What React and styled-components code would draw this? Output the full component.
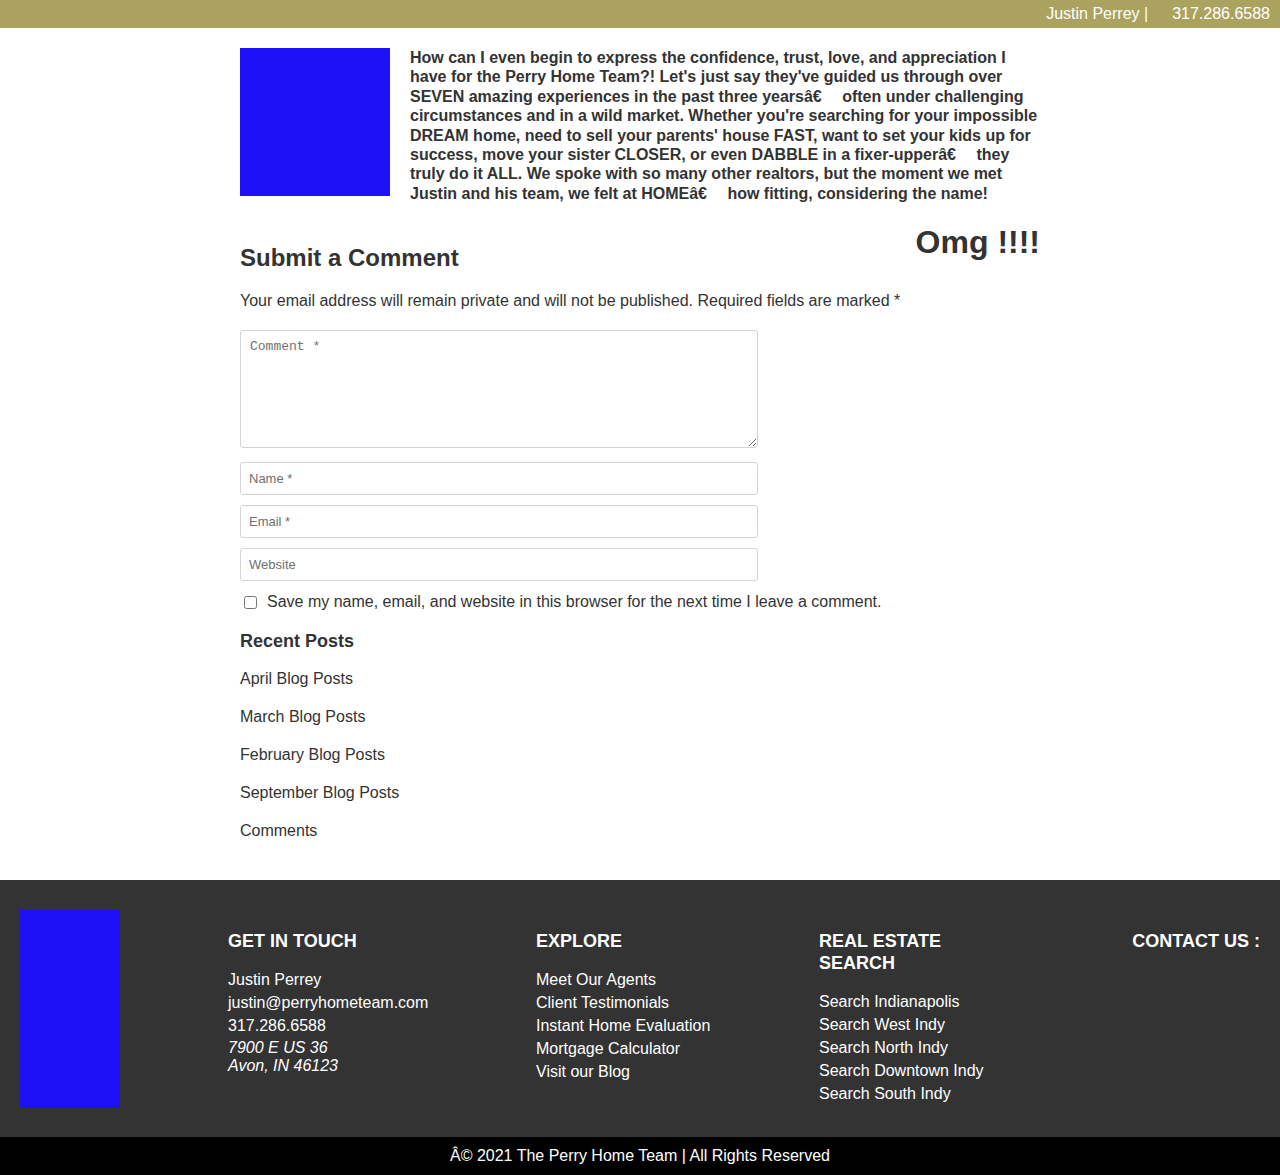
import React from "react";
import styled, { createGlobalStyle } from "styled-components";

const Global = createGlobalStyle`
  html, body { margin: 0; padding: 0; background: #fff; }
  body { font-family: "Liberation Sans", Arial, sans-serif; color: #333; font-size: 16px; }
  * { box-sizing: border-box; }
`;

const TopBar = styled.div`
  height: 28px;
  background: #aba260;
  display: flex;
  justify-content: flex-end;
  align-items: center;
  padding-right: 10px;
  color: #fff;
  font-size: 16px;
`;
const TopItem = styled.span`
  margin-left: ${(p) => p.$gap || 0}px;
`;

const Main = styled.main`
  width: 800px;
  margin: 0 auto;
  padding: 20px 0 30px;
`;

const Testimonial = styled.div`
  display: flex;
  gap: 20px;
  align-items: flex-start;
`;
const Photo = styled.div`
  flex: 0 0 150px;
  height: 148px;
  background: #1e10f7;
`;
const Quote = styled.p`
  margin: 0;
  font-weight: bold;
  font-size: 16px;
  line-height: 19.4px;
`;

const HeadRow = styled.div`
  display: flex;
  justify-content: space-between;
  align-items: flex-start;
  margin-top: 19px;
`;
const SubmitTitle = styled.h3`
  margin: 21px 0 0;
  font-size: 24px;
  line-height: 30px;
  font-weight: bold;
`;
const Omg = styled.h2`
  margin: 0;
  font-size: 32px;
  line-height: 40px;
  font-weight: bold;
`;
const Note = styled.p`
  margin: 16px 0 0;
  font-size: 16px;
  line-height: 24px;
`;

const Form = styled.form`
  display: flex;
  flex-direction: column;
  width: 518px;
  margin-top: 17px;
`;
const TextArea = styled.textarea`
  display: block;
  width: 518px;
  height: 118px;
  border: 1px solid #d4d4d4;
  border-radius: 3px;
  padding: 8px 9px;
  font-family: "Liberation Mono", monospace;
  font-size: 13px;
  margin-bottom: 14px;
  &::placeholder { color: #6f6f6f; }
`;
const Input = styled.input`
  display: block;
  width: 518px;
  height: 33px;
  border: 1px solid #d4d4d4;
  border-radius: 3px;
  padding: 0 8px;
  font-family: "Liberation Sans", Arial, sans-serif;
  font-size: 13px;
  margin-bottom: 10px;
  &::placeholder { color: #6f6f6f; }
`;
const CheckRow = styled.label`
  display: flex;
  align-items: center;
  width: 800px;
  line-height: 20px;
  font-size: 16px;
  margin-top: 1px;
`;
const Check = styled.input`
  width: 13px;
  height: 13px;
  margin: 0 10px 0 4px;
`;

const RecentTitle = styled.h4`
  margin: 18px 0 8px;
  font-size: 18px;
  line-height: 22px;
  font-weight: bold;
`;
const PostLink = styled.a`
  display: block;
  line-height: 38px;
  font-size: 16px;
  color: #333;
  text-decoration: none;
`;

const Footer = styled.footer`
  background: #333333;
  color: #fff;
  display: flex;
  padding: 30px 20px 29px;
`;
const Logo = styled.div`
  flex: 0 0 100px;
  height: 198px;
  background: #1e10f7;
  margin-right: 108px;
`;
const Col = styled.div`
  flex: 0 0 ${(p) => p.$w}px;
  padding-top: 20px;
  ${(p) => p.$right && "flex: 1 1 auto; text-align: right;"}
`;
const ColTitle = styled.h4`
  margin: 0 0 16px;
  font-size: 18px;
  line-height: 22px;
  font-weight: bold;
  text-transform: uppercase;
`;
const FLine = styled.div`
  line-height: 23px;
  font-size: 16px;
`;
const Address = styled.address`
  font-style: italic;
  line-height: 18px;
  font-size: 16px;
  margin-top: 2px;
`;

const Bottom = styled.div`
  background: #000;
  color: #fff;
  height: 38px;
  display: flex;
  align-items: center;
  justify-content: center;
  font-size: 16px;
`;

const DASH = "â€\u2003 ";

export default function App() {
  return (
    <>
      <Global />
      <TopBar>
        <TopItem>Justin Perrey |</TopItem>
        <TopItem $gap={24}>317.286.6588</TopItem>
      </TopBar>
      <Main>
        <Testimonial>
          <Photo />
          <Quote>
            {`How can I even begin to express the confidence, trust, love, and appreciation I have for the Perry Home Team?! Let's just say they've guided us through over SEVEN amazing experiences in the past three years${DASH}often under challenging circumstances and in a wild market. Whether you're searching for your impossible DREAM home, need to sell your parents' house FAST, want to set your kids up for success, move your sister CLOSER, or even DABBLE in a fixer-upper${DASH}they truly do it ALL. We spoke with so many other realtors, but the moment we met Justin and his team, we felt at HOME${DASH}how fitting, considering the name!`}
          </Quote>
        </Testimonial>
        <HeadRow>
          <SubmitTitle>Submit a Comment</SubmitTitle>
          <Omg>Omg !!!!</Omg>
        </HeadRow>
        <Note>Your email address will remain private and will not be published. Required fields are marked *</Note>
        <Form onSubmit={(e) => e.preventDefault()}>
          <TextArea placeholder="Comment *" />
          <Input placeholder="Name *" />
          <Input placeholder="Email *" />
          <Input placeholder="Website" />
          <CheckRow>
            <Check type="checkbox" />
            Save my name, email, and website in this browser for the next time I leave a comment.
          </CheckRow>
        </Form>
        <RecentTitle>Recent Posts</RecentTitle>
        <PostLink href="#">April Blog Posts</PostLink>
        <PostLink href="#">March Blog Posts</PostLink>
        <PostLink href="#">February Blog Posts</PostLink>
        <PostLink href="#">September Blog Posts</PostLink>
        <PostLink href="#">Comments</PostLink>
      </Main>
      <Footer>
        <Logo />
        <Col $w={308}>
          <ColTitle>Get in Touch</ColTitle>
          <FLine>Justin Perrey</FLine>
          <FLine>justin@perryhometeam.com</FLine>
          <FLine>317.286.6588</FLine>
          <Address>7900 E US 36<br />Avon, IN 46123</Address>
        </Col>
        <Col $w={283}>
          <ColTitle>Explore</ColTitle>
          <FLine>Meet Our Agents</FLine>
          <FLine>Client Testimonials</FLine>
          <FLine>Instant Home Evaluation</FLine>
          <FLine>Mortgage Calculator</FLine>
          <FLine>Visit our Blog</FLine>
        </Col>
        <Col $w={170}>
          <ColTitle>Real Estate Search</ColTitle>
          <FLine>Search Indianapolis</FLine>
          <FLine>Search West Indy</FLine>
          <FLine>Search North Indy</FLine>
          <FLine>Search Downtown Indy</FLine>
          <FLine>Search South Indy</FLine>
        </Col>
        <Col $right>
          <ColTitle>Contact Us :</ColTitle>
        </Col>
      </Footer>
      <Bottom>Â© 2021 The Perry Home Team | All Rights Reserved</Bottom>
    </>
  );
}
